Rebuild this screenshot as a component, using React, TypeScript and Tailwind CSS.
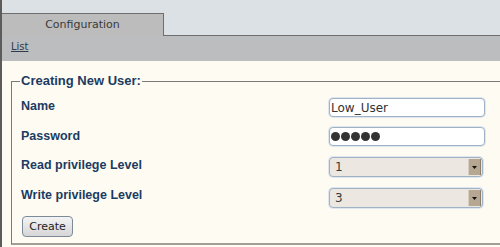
export default function App() {
  const rows: { label: string; kind: 'text' | 'password' | 'select'; value: string; labelClass: string }[] = [
    { label: 'Name', kind: 'text', value: 'Low_User', labelClass: 'pt-[1px]' },
    { label: 'Password', kind: 'password', value: '12345', labelClass: 'pt-[2px]' },
    { label: 'Read privilege Level', kind: 'select', value: '1', labelClass: 'pt-[1px]' },
    { label: 'Write privilege Level', kind: 'select', value: '3', labelClass: 'pt-0' },
  ];

  return (
    <div className="h-[247px] w-[500px] overflow-hidden border-l-2 border-[#5c5c5c] bg-[#fefbf2] font-['DejaVu_Sans',sans-serif]">
      {/* tabs */}
      <div className="flex bg-[#dbe1e4] pt-[13px]">
        <div className="flex h-[23px] w-[162px] items-center justify-center border-t border-r border-[#6e6e6e] bg-[#bcbcbc] text-[11px] text-[#3a3a3a]">
          Configuration
        </div>
        <div className="flex-1 border-b border-[#6e6e6e]" />
      </div>

      {/* sub nav */}
      <div className="h-[25px] bg-[#bcbdbe] px-[9px] pt-[5px] text-[10px] leading-[12px]">
        <a href="#" className="text-[#2d3b4a] underline">
          List
        </a>
      </div>

      {/* form */}
      <fieldset className="mt-[12px] ml-[9px] -mr-[20px] border-t border-l border-b-2 border-[#7a7a7a] border-b-[#a39e95] pt-[9px] pb-[6px] pl-[9px]">
        <legend className="-ml-[1px] px-[1px] font-['Liberation_Sans',sans-serif] text-[13px] leading-[16px] font-bold text-[#1b3b62]">
          Creating New User:
        </legend>
        <div className="flex flex-col">
          {rows.map((row, i) => (
            <div
              key={row.label}
              className={`grid grid-cols-[308px_156px] items-start ${
                i === 0 ? '' : i === 1 ? 'mt-[10px]' : 'mt-[11px]'
              }`}
            >
              <span
                className={`font-['Liberation_Sans',sans-serif] text-[12.5px] leading-[15px] font-bold text-[#1b3b62] ${row.labelClass}`}
              >
                {row.label}
              </span>
              {row.kind === 'text' && (
                <div className="flex h-[19px] items-center rounded-[4px] border border-[#9fb2c6] bg-white px-px text-[12px] text-[#333] shadow-[0_0_0_1px_#dfe6ed]">
                  {row.value}
                </div>
              )}
              {row.kind === 'password' && (
                <div className="flex h-[19px] items-center gap-px rounded-[4px] border border-[#9fb2c6] bg-white px-px shadow-[0_0_0_1px_#dfe6ed]">
                  {row.value.split('').map((_, k) => (
                    <span key={k} className="h-[9px] w-[9px] rounded-full bg-[#333]" />
                  ))}
                </div>
              )}
              {row.kind === 'select' && (
                <div className="flex h-[20px] w-[154px] items-center justify-between rounded-[4px] border border-[#9fb2c6] bg-[#ece8e1] pr-px pl-[5px] text-[12px] text-[#3a3a3a] shadow-[0_0_0_1px_#dfe6ed]">
                  <span>{row.value}</span>
                  <span className="flex h-[16px] w-[13px] items-center justify-center border-l border-[#d8cfc2] border-r border-r-[#8c7f6c] bg-[#b6a792]">
                    <svg width="5" height="3" viewBox="0 0 5 3">
                      <path d="M0 0h5L2.5 3z" fill="#111" />
                    </svg>
                  </span>
                </div>
              )}
            </div>
          ))}
          <div className="mt-[8px] flex">
            <button
              type="button"
              className="ml-px h-[21px] w-[51px] rounded-[4px] border border-[#7d8b99] bg-gradient-to-b from-[#f4f4f4] to-[#d6d6d6] text-[11px] leading-[19px] text-[#222]"
            >
              Create
            </button>
          </div>
        </div>
      </fieldset>
    </div>
  );
}
